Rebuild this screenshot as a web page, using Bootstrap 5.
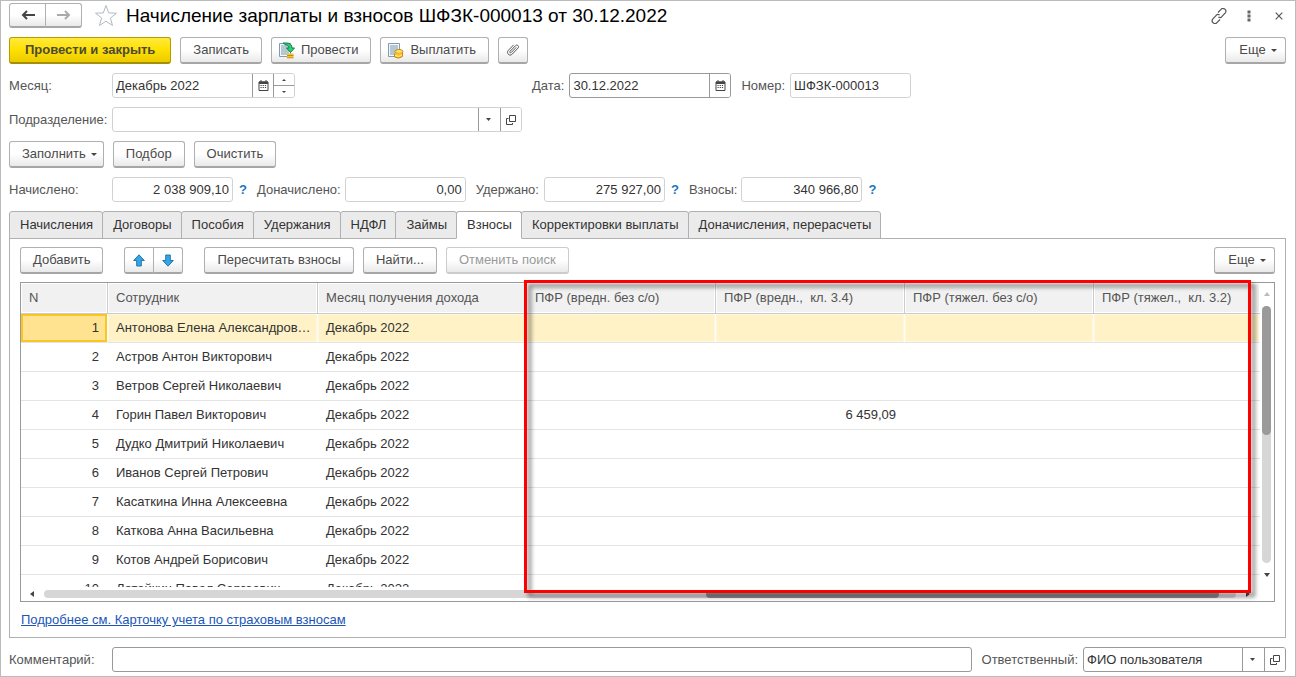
<!DOCTYPE html>
<html lang="ru">
<head>
<meta charset="utf-8">
<meta name="viewport" content="width=device-width, initial-scale=1">
<title>Начисление зарплаты и взносов</title>
<link rel="stylesheet" href="https://cdn.jsdelivr.net/npm/bootstrap@5.3.0/dist/css/bootstrap.min.css">
<style>
body{font-family:"Liberation Sans",Arial,sans-serif;font-size:13px;line-height:16px;color:#333;background:#fff}
.app-window{border:1px solid #bbb;padding:2px 9px 4px 8px;gap:9px}
.app-title{font-size:19px;line-height:24px;font-weight:400;color:#000}
.window-tools{gap:10px;margin-right:-3px}
.bar{display:flex;gap:9px}
.btn-ui{--bs-btn-font-size:13px;--bs-btn-line-height:16px;--bs-btn-padding-x:12px;--bs-btn-padding-y:0px;--bs-btn-color:#4a4a4a;--bs-btn-hover-color:#222;--bs-btn-border-color:#b0b0b0;--bs-btn-hover-border-color:#888;--bs-btn-border-radius:3px;--bs-btn-disabled-color:#999;--bs-btn-disabled-border-color:#ccc;--bs-btn-disabled-opacity:1;height:27px;display:inline-flex;align-items:center;justify-content:center;white-space:nowrap;background:linear-gradient(#fff 50%,#e9e9e9);border-bottom:2px solid #a6a6a6}
.btn-ui:disabled{border-bottom-color:#ccc}
.btn-main{--bs-btn-padding-x:15px;--bs-btn-color:#4a4a3a;--bs-btn-border-color:#b59d00;background:linear-gradient(#ffea3d,#ffe000 50%,#eacb00);border-bottom-color:#a58f00;font-weight:700}
.btn-nav{height:25px;width:37px;padding:0}
.btn-square{width:30px;padding:0}
.btn-more{width:61px;padding:0 0 0 5px}
.btn-drop{padding-right:6px}
.btn-icon-text{padding:0 12px 0 6px;gap:6px}
.tri{border:3px solid transparent;border-top-color:#444;border-bottom:0;margin-left:5px}
.plain{border:0;background:none;padding:0;color:#555;width:20px;height:24px;display:inline-flex;align-items:center;justify-content:center}
.lbl{color:#555;white-space:nowrap}
.lbl-first{width:103px;flex:none}
.lbl-next{margin:0 5px 0 10px}
.left-block{width:513px}
.field{display:flex;height:25px;border:1px solid #d2d2d2;border-radius:3px;background:#fff;overflow:hidden}
.field.strong{border-color:#999}
.field input,.field select{border:0;outline:0;padding:0 3px;flex:1 1 0;min-width:0;width:100%;color:#333;background:none;appearance:none}
.field button{border:0;border-left:1px solid #999;background:#fff;width:21px;padding:0;flex:none;display:flex;align-items:center;justify-content:center;color:#444}
.field select{background:url("data:image/svg+xml,%3Csvg xmlns='http://www.w3.org/2000/svg' width='22' height='24'%3E%3Cpath d='M.5 0v24' stroke='%23999'/%3E%3Cpath d='M8 10.500h5l-2.500 3z' fill='%23444'/%3E%3C/svg%3E") right center no-repeat}
.w-date{width:162px}.w-num{width:121px}.w-month{width:183px}.w-owner{width:203px}
.field .spin{width:21px;border-left:1px solid #999;display:flex;flex-direction:column}
.field .spin button{border-left:0;width:auto;flex:1}
.field .spin button+button{border-top:1px solid #999}
.help{color:#1678c2;font-weight:700;width:24px;padding-right:4px;text-align:center;text-decoration:none}
.work-area{min-height:0}
.tabs-ui{border:0;--bs-nav-tabs-border-width:1px}
.tabs-ui .nav-link{height:28px;padding:0 9px 0 10px;margin:0 0 0 -1px;border:1px solid #b0b0b0;border-radius:3px 3px 0 0;background:#ebebeb;color:#333;line-height:16px;white-space:nowrap}
.tabs-ui .nav-item:first-child .nav-link{margin-left:0}
.tabs-ui .nav-link.active{background:#fff;border-color:#b0b0b0;border-bottom-color:#fff;position:relative;z-index:1;color:#333}
.tab-panel{border:1px solid #b0b0b0;padding:8px 10px 9px;gap:8px;margin-top:-1px;min-height:0}
.grid-frame{position:relative;border:1px solid #999;min-height:0}
.grid-view{overflow:hidden;flex-basis:0;min-height:0}
.grid-table{table-layout:fixed;width:100%;border-collapse:separate;border-spacing:0}
.grid-table th,.grid-table td{height:29px;padding:0 4px 0 8px;white-space:nowrap;overflow:hidden;text-overflow:ellipsis;border-bottom:1px solid #e4e4e4}
.grid-table th{height:31px;font-weight:400;color:#555;background:#f1f1f1;border-right:1px solid #ccc;border-bottom:1px solid #ccc;box-shadow:inset 0 0 0 1px #fff}
.grid-table th:last-child{border-right:0}
.grid-table td.num{text-align:right;padding-right:9px}
.grid-table .picked td{background:#fef2c6;border-right:1px solid #fffdf3;box-shadow:inset 0 0 0 1px #fef8e3}
.grid-table .picked td:first-child{background:#ffe391;box-shadow:inset 0 0 0 2px #f9c623;padding-right:8px}
.c-n{width:87px}.c-name{width:210px}.c-month{width:209px}.c-sum{width:189px}
.vbar{width:15px;padding:9px 3px 24px 2px;gap:10px}
.vbar .track{background:#d6d6d6;border-radius:5px;width:9px}
.vbar .thumb{background:#9a9a9a;border-radius:5px;height:50%}
.hbar{height:14px;padding:0 10px 0 9px;gap:10px}
.hbar .track{background:#d6d6d6;border-radius:4px;height:8px}
.hbar .thumb{background:#8b8b8b;border-radius:4px;height:8px;width:43%;margin-right:17px}
.highlight{position:absolute;left:503px;right:23px;top:-3px;bottom:8px;border:3px solid #f00;filter:drop-shadow(4px 4px 2px rgba(0,0,0,.5));pointer-events:none;z-index:2}
.more-row{padding:2px 0 0 1px}
.more-link{color:#1a56b8}
</style>
</head>
<body>
<svg class="d-none" xmlns="http://www.w3.org/2000/svg">
<symbol id="cal" viewBox="0 0 11 11"><path d="M1 2h9v8.500H1z" fill="none" stroke="#444"/><path d="M1 1.500h9V4H1zM2.500 0h1v2h-1zM7.500 0h1v2h-1z" fill="#444"/><path d="M2.500 5.500h6M2.500 7.500h6" stroke="#444" stroke-dasharray="1.200 1"/></symbol>
<symbol id="open" viewBox="0 0 10 10"><path d="M3.500.5h6v6h-6zM2.500 3.500H.5v6h6V8" fill="none" stroke="#444"/></symbol>
<symbol id="up" viewBox="0 0 12 13"><path d="M6 .8 11.300 6.500H8.300V12H3.700V6.500H.7z" fill="#35a5e5" stroke="#2277a8"/></symbol>
<symbol id="sheet" viewBox="0 0 17 17"><path d="M1.500 1.500h11v13h-11z" fill="#f3f8fb" stroke="#819bab"/><path d="M3 4h8M3 6h8M3 8h8M3 10h8M3 12h8" stroke="#7895a9"/></symbol>
</svg>
<main class="app-window d-flex flex-column vh-100">
  <header class="d-flex align-items-center">
    <div class="btn-group">
      <button class="btn btn-ui btn-nav" type="button" aria-label="Назад"><svg width="14" height="10" viewBox="0 0 14 10"><path d="M14 5H3M6 1 2 5l4 4" fill="none" stroke="#444" stroke-width="2"/></svg></button>
      <button class="btn btn-ui btn-nav" type="button" aria-label="Вперед"><svg width="14" height="10" viewBox="0 0 14 10"><path d="M0 5h11M8 1l4 4-4 4" fill="none" stroke="#aaa" stroke-width="2"/></svg></button>
    </div>
    <button class="plain ms-2 me-1 w-auto px-1" type="button" aria-label="В избранное"><svg width="24" height="23" viewBox="0 0 24 23"><path d="m12 1.500 2.700 7.400 7.800.3-6.100 4.800 2.100 7.500-6.500-4.300-6.500 4.300 2.100-7.500-6.100-4.800 7.800-.3z" fill="#fff" stroke="#b4bac2"/></svg></button>
    <h1 class="app-title mb-0 me-auto">Начисление зарплаты и взносов ШФЗК-000013 от 30.12.2022</h1>
    <div class="window-tools d-flex">
      <button class="plain" type="button" aria-label="Ссылка"><svg width="16" height="16" viewBox="0 0 16 16"><path d="M7 4.500 9.800 1.700a2.600 2.600 0 0 1 4.500 3.200L10.800 8.700a2.600 2.600 0 0 1-3.400.2M9 11.500 6.200 14.300a2.600 2.600 0 0 1-4.500-3.200L5.200 7.300a2.600 2.600 0 0 1 3.400-.2" fill="none" stroke="#555" stroke-width="1.200"/></svg></button>
      <button class="plain" type="button" aria-label="Меню"><svg width="4" height="12" viewBox="0 0 4 12"><path d="M.5.500h3v3h-3zM.5 4.500h3v3h-3zM.5 8.500h3v3h-3z" fill="#666"/></svg></button>
      <button class="plain" type="button" aria-label="Закрыть"><svg width="8" height="8" viewBox="0 0 8 8"><path d="m.7.700 6.600 6.600m0-6.600L.7 7.300" stroke="#555" stroke-width="1.200"/></svg></button>
    </div>
  </header>

  <div class="bar">
    <button class="btn btn-ui btn-main" type="button">Провести и закрыть</button>
    <button class="btn btn-ui" type="button">Записать</button>
    <button class="btn btn-ui btn-icon-text" type="button"><svg width="17" height="17"><use href="#sheet"/><path d="M5 1h4c3 0 5 2 5 5h2.500l-4 4.500-4-4.500H11c0-2-1-3-3-3z" fill="#2fd07c" stroke="#128044"/><path d="M9 11.500h6.500v4H9z" fill="#f4c62c"/><path d="M9 13.500h6.500M9 15.800h6.500" stroke="#c68a11"/></svg>Провести</button>
    <button class="btn btn-ui btn-icon-text" type="button"><svg width="17" height="17"><use href="#sheet"/><ellipse cx="12" cy="9.500" rx="4" ry="2" fill="#ffe36b" stroke="#c88a15"/><path d="M7.500 11.500v3.500q4 2.500 8-.5V10" fill="#f4bf2b" stroke="#c88a15"/><path d="M8 13.500q4 2 7-.5" fill="none" stroke="#fff0a0"/></svg>Выплатить</button>
    <button class="btn btn-ui btn-square" type="button" aria-label="Присоединенные файлы"><svg width="14" height="14" viewBox="0 0 14 14"><path d="m10.300 4.300-5.100 5.200c-.9.900-2-.2-1.200-1.200L9.500 2.700c1.700-1.700 4.200.6 2.500 2.400L6.400 11c-2.900 2.900-6.600-.9-4-3.700L7.600 1.900" fill="none" stroke="#555"/></svg></button>
    <button class="btn btn-ui btn-more ms-auto" type="button">Еще<span class="tri"></span></button>
  </div>

  <div class="d-flex align-items-center">
    <div class="left-block d-flex align-items-center">
      <label class="lbl lbl-first" for="month">Месяц:</label>
      <div class="field w-month"><input id="month" value="Декабрь 2022"><button type="button" aria-label="Календарь"><svg width="11" height="11"><use href="#cal"/></svg></button>
        <div class="spin"><button type="button" aria-label="Больше"><svg width="4" height="2"><path d="m0 2 2-2 2 2z" fill="#444"/></svg></button><button type="button" aria-label="Меньше"><svg width="4" height="2"><path d="m0 0 2 2 2-2z" fill="#444"/></svg></button></div></div>
    </div>
    <label class="lbl lbl-next" for="date">Дата:</label>
    <div class="field strong w-date"><input id="date" value="30.12.2022"><button type="button" aria-label="Календарь"><svg width="11" height="11"><use href="#cal"/></svg></button></div>
    <label class="lbl lbl-next" for="number">Номер:</label>
    <div class="field w-num"><input id="number" value="ШФЗК-000013"></div>
  </div>

  <div class="left-block d-flex align-items-center">
    <label class="lbl lbl-first" for="dept">Подразделение:</label>
    <div class="field flex-grow-1"><select id="dept"><option></option></select><button type="button" aria-label="Открыть"><svg width="10" height="10"><use href="#open"/></svg></button></div>
  </div>

  <div class="bar">
    <button class="btn btn-ui btn-drop" type="button">Заполнить<span class="tri"></span></button>
    <button class="btn btn-ui" type="button">Подбор</button>
    <button class="btn btn-ui" type="button">Очистить</button>
  </div>

  <div class="d-flex align-items-center">
    <label class="lbl lbl-first" for="accrued">Начислено:</label>
    <div class="field w-num"><input id="accrued" class="text-end" value="2 038 909,10"></div><a class="help" href="#">?</a>
    <label class="lbl me-1" for="extra">Доначислено:</label>
    <div class="field w-num"><input id="extra" class="text-end" value="0,00"></div>
    <label class="lbl lbl-next" for="held">Удержано:</label>
    <div class="field w-num"><input id="held" class="text-end" value="275 927,00"></div><a class="help" href="#">?</a>
    <label class="lbl me-1" for="dues">Взносы:</label>
    <div class="field w-num"><input id="dues" class="text-end" value="340 966,80"></div><a class="help" href="#">?</a>
  </div>

  <div class="work-area d-flex flex-column flex-grow-1">
    <ul class="nav nav-tabs tabs-ui">
      <li class="nav-item"><button class="nav-link" type="button">Начисления</button></li>
      <li class="nav-item"><button class="nav-link" type="button">Договоры</button></li>
      <li class="nav-item"><button class="nav-link" type="button">Пособия</button></li>
      <li class="nav-item"><button class="nav-link" type="button">Удержания</button></li>
      <li class="nav-item"><button class="nav-link" type="button">НДФЛ</button></li>
      <li class="nav-item"><button class="nav-link" type="button">Займы</button></li>
      <li class="nav-item"><button class="nav-link active" type="button">Взносы</button></li>
      <li class="nav-item"><button class="nav-link" type="button">Корректировки выплаты</button></li>
      <li class="nav-item"><button class="nav-link" type="button">Доначисления, перерасчеты</button></li>
    </ul>
    <section class="tab-panel d-flex flex-column flex-grow-1">
      <div class="bar">
        <button class="btn btn-ui" type="button">Добавить</button>
        <div class="btn-group mx-2 px-1">
          <button class="btn btn-ui btn-square" type="button" aria-label="Вверх"><svg width="12" height="13"><use href="#up"/></svg></button>
          <button class="btn btn-ui btn-square" type="button" aria-label="Вниз"><svg width="12" height="13"><use href="#up" transform="rotate(180 6 6.500)"/></svg></button>
        </div>
        <button class="btn btn-ui" type="button">Пересчитать взносы</button>
        <button class="btn btn-ui" type="button">Найти...</button>
        <button class="btn btn-ui" type="button" disabled>Отменить поиск</button>
        <button class="btn btn-ui btn-more ms-auto" type="button">Еще<span class="tri"></span></button>
      </div>
      <div class="grid-frame d-flex flex-grow-1">
        <div class="d-flex flex-column flex-grow-1">
          <div class="grid-view flex-grow-1">
            <table class="grid-table">
              <colgroup><col class="c-n"><col class="c-name"><col class="c-month"><col class="c-sum"><col class="c-sum"><col class="c-sum"><col></colgroup>
              <thead><tr><th>N</th><th>Сотрудник</th><th>Месяц получения дохода</th><th>ПФР (вредн. без с/о)</th><th>ПФР (вредн.,&nbsp; кл. 3.4)</th><th>ПФР (тяжел. без с/о)</th><th>ПФР (тяжел.,&nbsp; кл. 3.2)</th></tr></thead>
              <tbody>
                <tr class="picked"><td class="num">1</td><td>Антонова Елена Александров…</td><td>Декабрь 2022</td><td></td><td></td><td></td><td></td></tr>
                <tr><td class="num">2</td><td>Астров Антон Викторович</td><td>Декабрь 2022</td><td></td><td></td><td></td><td></td></tr>
                <tr><td class="num">3</td><td>Ветров Сергей Николаевич</td><td>Декабрь 2022</td><td></td><td></td><td></td><td></td></tr>
                <tr><td class="num">4</td><td>Горин Павел Викторович</td><td>Декабрь 2022</td><td></td><td class="num">6 459,09</td><td></td><td></td></tr>
                <tr><td class="num">5</td><td>Дудко Дмитрий Николаевич</td><td>Декабрь 2022</td><td></td><td></td><td></td><td></td></tr>
                <tr><td class="num">6</td><td>Иванов Сергей Петрович</td><td>Декабрь 2022</td><td></td><td></td><td></td><td></td></tr>
                <tr><td class="num">7</td><td>Касаткина Инна Алексеевна</td><td>Декабрь 2022</td><td></td><td></td><td></td><td></td></tr>
                <tr><td class="num">8</td><td>Каткова Анна Васильевна</td><td>Декабрь 2022</td><td></td><td></td><td></td><td></td></tr>
                <tr><td class="num">9</td><td>Котов Андрей Борисович</td><td>Декабрь 2022</td><td></td><td></td><td></td><td></td></tr>
                <tr><td class="num">10</td><td>Лотейкин Павел Сергеевич</td><td>Декабрь 2022</td><td></td><td></td><td></td><td></td></tr>
              </tbody>
            </table>
          </div>
          <div class="hbar d-flex align-items-center">
            <svg width="4" height="6"><path d="M4 0v6L0 3z" fill="#444"/></svg>
            <div class="track flex-grow-1 d-flex justify-content-end"><div class="thumb"></div></div>
            <svg width="4" height="6"><path d="M0 0v6l4-3z" fill="#444"/></svg>
          </div>
        </div>
        <div class="vbar d-flex flex-column align-items-center">
          <svg class="flex-shrink-0" width="6" height="4"><path d="M0 4h6L3 0z" fill="#bbb"/></svg>
          <div class="track flex-grow-1"><div class="thumb"></div></div>
          <svg class="flex-shrink-0" width="6" height="4"><path d="M0 0h6L3 4z" fill="#444"/></svg>
        </div>
        <div class="highlight"></div>
      </div>
      <div class="more-row"><a class="more-link" href="#">Подробнее см. Карточку учета по страховым взносам</a></div>
    </section>
  </div>

  <footer class="d-flex align-items-center">
    <label class="lbl lbl-first" for="note">Комментарий:</label>
    <div class="field strong flex-grow-1"><input id="note"></div>
    <label class="lbl lbl-next" for="owner">Ответственный:</label>
    <div class="field strong w-owner"><select id="owner"><option>ФИО пользователя</option></select><button type="button" aria-label="Открыть"><svg width="10" height="10"><use href="#open"/></svg></button></div>
  </footer>
</main>
<script src="https://cdn.jsdelivr.net/npm/bootstrap@5.3.0/dist/js/bootstrap.bundle.min.js"></script>
</body>
</html>
